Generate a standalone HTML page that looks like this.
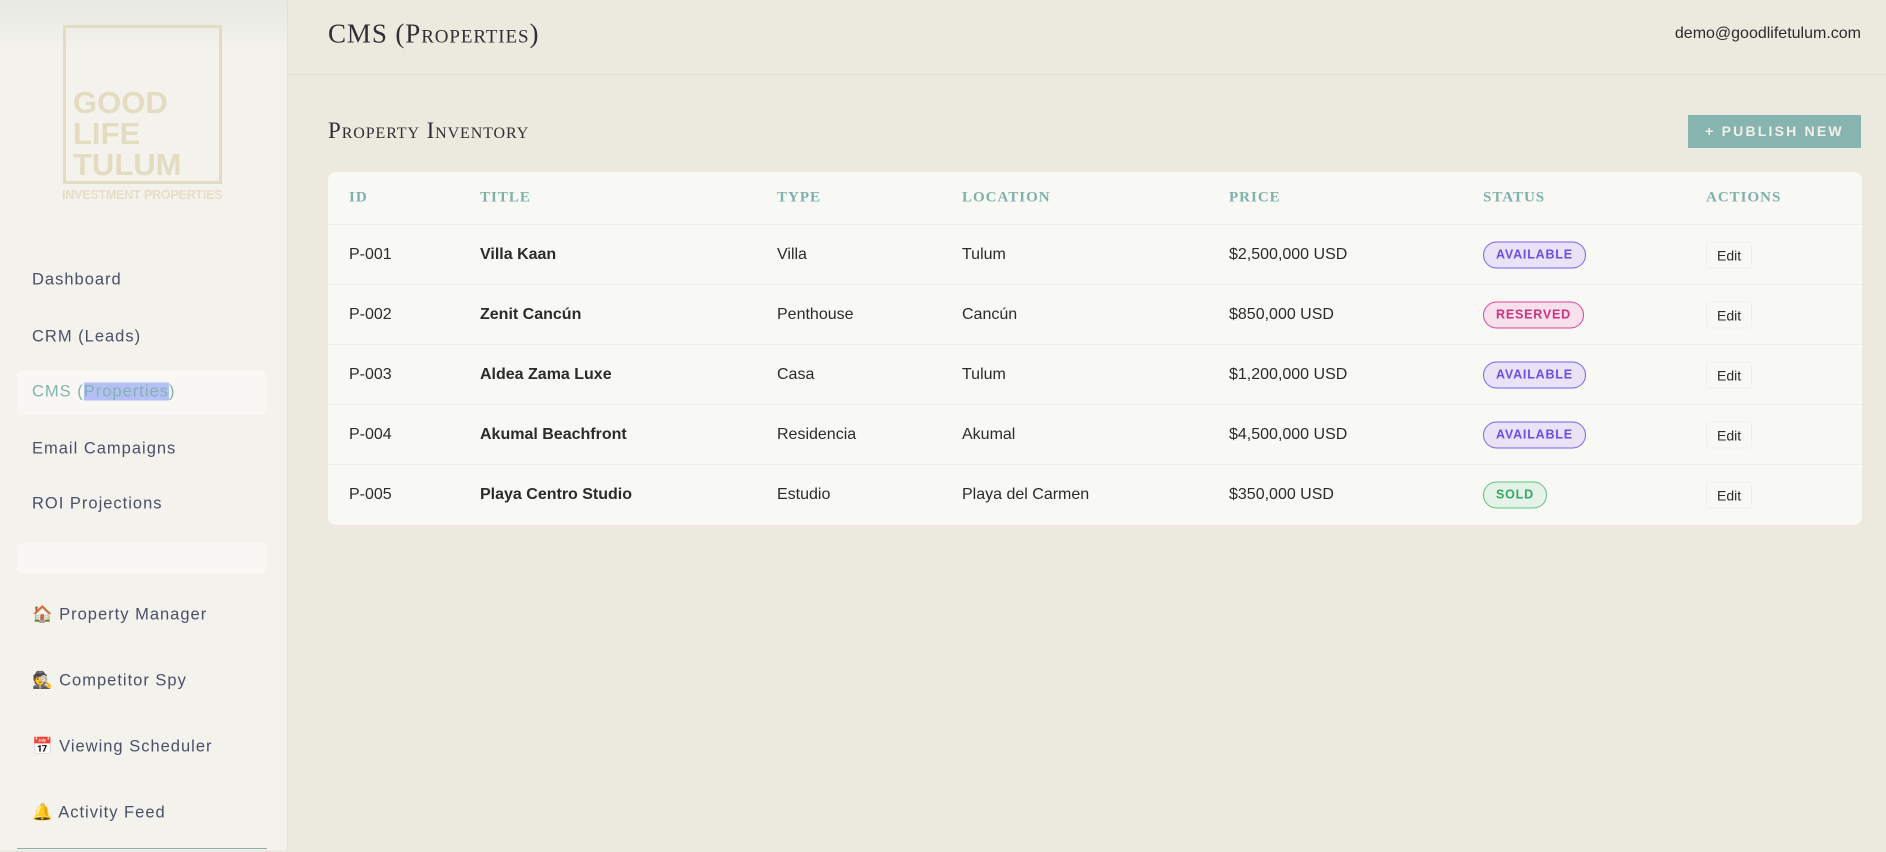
<!DOCTYPE html>
<html><head><meta charset="utf-8">
<style>
*{box-sizing:border-box;margin:0;padding:0}
body{width:1886px;height:850px;overflow:hidden;background:#ece9df;font-family:"Liberation Sans","DejaVu Sans",sans-serif;position:relative;color:#2b2b2b}
.side{position:absolute;left:0;top:0;width:288px;height:850px;background:linear-gradient(#e8e9e4 0,#f3f2ed 50px,#f3f2ed 100%);border-right:1px solid #e4e1d6}
.logo{position:absolute;left:63px;top:25px;width:159px;height:159px;border:3px solid #e3dcc0}
.logo .t{position:absolute;left:7px;top:59px;font-weight:bold;font-size:31px;line-height:31px;color:#e3dcc0;letter-spacing:0}
.logo2{position:absolute;left:62px;top:188px;width:162px;font-weight:bold;font-size:12.5px;color:#e5dfc6;letter-spacing:-.2px;white-space:nowrap}
.nav{position:absolute;left:32px;font-size:16.5px;color:#4a5068;letter-spacing:1px;transform:translateY(-50%)}
.active{position:absolute;left:17px;top:370px;width:250px;height:45px;background:#f8f7f3;border-radius:6px}
.empty{position:absolute;left:17px;top:543px;width:250px;height:31px;background:#f8f7f3;border-radius:6px}
.bot{position:absolute;left:17px;top:848px;width:250px;height:4px;border-top:1px solid #7fb3ab}
.hdr{position:absolute;left:288px;top:0;right:0;height:75px;border-bottom:1px solid #e2dfd3}
.title{position:absolute;left:328px;top:34px;transform:translateY(-50%);font-family:"Liberation Serif",serif;font-variant:small-caps;font-size:27px;color:#2f3033;letter-spacing:.9px}
.email{position:absolute;right:25px;top:34px;transform:translateY(-50%);font-size:16px;color:#2b2b2b}
.sub{position:absolute;left:328px;top:131px;transform:translateY(-50%);font-family:"Liberation Serif",serif;font-variant:small-caps;font-size:23px;letter-spacing:.9px;color:#2f3033}
.btn{position:absolute;left:1688px;top:115px;width:173px;height:33px;background:#88b4af;color:#f1f0ea;font-size:14px;font-weight:bold;letter-spacing:2.2px;text-align:center;line-height:33px}
.card{position:absolute;left:328px;top:172px;width:1534px;height:353px;background:#f8f8f4;border-radius:8px}
.row{position:absolute;left:0;width:1534px;height:60px;border-top:1px solid #efeee8}
.c{position:absolute;top:50%;transform:translateY(-50%);font-size:16px;color:#2b2b2b;white-space:nowrap}
.h{font-family:"Liberation Serif",serif;font-size:15px;color:#7fb0aa;letter-spacing:1px;font-weight:bold}
.b{font-weight:bold}
.badge{font-size:12.5px;font-weight:bold;letter-spacing:.8px;padding:0 12px;height:27px;line-height:25px;border-radius:14px;border:1.5px solid}
.av{background:#e8e3f6;border-color:#7b61f0;color:#6a4ee8}
.rs{background:#f7e1ec;border-color:#e0409a;color:#d2307f}
.sd{background:#e4f2e7;border-color:#5cc283;color:#35a862}
.edit{font-size:14px;padding:0 10px;height:27px;line-height:27px;border:1px solid #f1f0eb;border-radius:3px;background:#f8f8f4}
</style></head><body>
<div class="side">
<div class="logo"><div class="t">GOOD<br>LIFE<br>TULUM</div></div>
<div class="logo2">INVESTMENT PROPERTIES</div>
<div class="active"></div>
<div class="nav" style="top:280px">Dashboard</div>
<div class="nav" style="top:337px">CRM (Leads)</div>
<div class="nav" style="top:392px;color:#82b4ad">CMS (<span style="background:#b3bff5">Properties</span>)</div>
<div class="nav" style="top:449px">Email Campaigns</div>
<div class="nav" style="top:504px">ROI Projections</div>
<div class="empty"></div>
<div class="nav" style="top:615px">🏠 Property Manager</div>
<div class="nav" style="top:681px">🕵 Competitor Spy</div>
<div class="nav" style="top:747px">📅 Viewing Scheduler</div>
<div class="nav" style="top:813px">🔔 Activity Feed</div>
<div class="bot"></div>
</div>
<div class="hdr"></div>
<div class="title">CMS (Properties)</div>
<div class="email">demo@goodlifetulum.com</div>
<div class="sub">Property Inventory</div>
<div class="btn">+ PUBLISH NEW</div>
<div class="card">
<div class="row" style="top:0;height:52px;border:0">
<div class="c h" style="left:21px">ID</div><div class="c h" style="left:152px">TITLE</div><div class="c h" style="left:449px">TYPE</div><div class="c h" style="left:634px">LOCATION</div><div class="c h" style="left:901px">PRICE</div><div class="c h" style="left:1155px">STATUS</div><div class="c h" style="left:1378px">ACTIONS</div>
</div>
<div class="row" style="top:52px">
<div class="c" style="left:21px">P-001</div><div class="c b" style="left:152px">Villa Kaan</div><div class="c" style="left:449px">Villa</div><div class="c" style="left:634px">Tulum</div><div class="c" style="left:901px">$2,500,000 USD</div><div class="c badge av" style="left:1155px">AVAILABLE</div><div class="c edit" style="left:1378px">Edit</div>
</div>
<div class="row" style="top:112px">
<div class="c" style="left:21px">P-002</div><div class="c b" style="left:152px">Zenit Cancún</div><div class="c" style="left:449px">Penthouse</div><div class="c" style="left:634px">Cancún</div><div class="c" style="left:901px">$850,000 USD</div><div class="c badge rs" style="left:1155px">RESERVED</div><div class="c edit" style="left:1378px">Edit</div>
</div>
<div class="row" style="top:172px">
<div class="c" style="left:21px">P-003</div><div class="c b" style="left:152px">Aldea Zama Luxe</div><div class="c" style="left:449px">Casa</div><div class="c" style="left:634px">Tulum</div><div class="c" style="left:901px">$1,200,000 USD</div><div class="c badge av" style="left:1155px">AVAILABLE</div><div class="c edit" style="left:1378px">Edit</div>
</div>
<div class="row" style="top:232px">
<div class="c" style="left:21px">P-004</div><div class="c b" style="left:152px">Akumal Beachfront</div><div class="c" style="left:449px">Residencia</div><div class="c" style="left:634px">Akumal</div><div class="c" style="left:901px">$4,500,000 USD</div><div class="c badge av" style="left:1155px">AVAILABLE</div><div class="c edit" style="left:1378px">Edit</div>
</div>
<div class="row" style="top:292px">
<div class="c" style="left:21px">P-005</div><div class="c b" style="left:152px">Playa Centro Studio</div><div class="c" style="left:449px">Estudio</div><div class="c" style="left:634px">Playa del Carmen</div><div class="c" style="left:901px">$350,000 USD</div><div class="c badge sd" style="left:1155px">SOLD</div><div class="c edit" style="left:1378px">Edit</div>
</div>
</div>
</body></html>
